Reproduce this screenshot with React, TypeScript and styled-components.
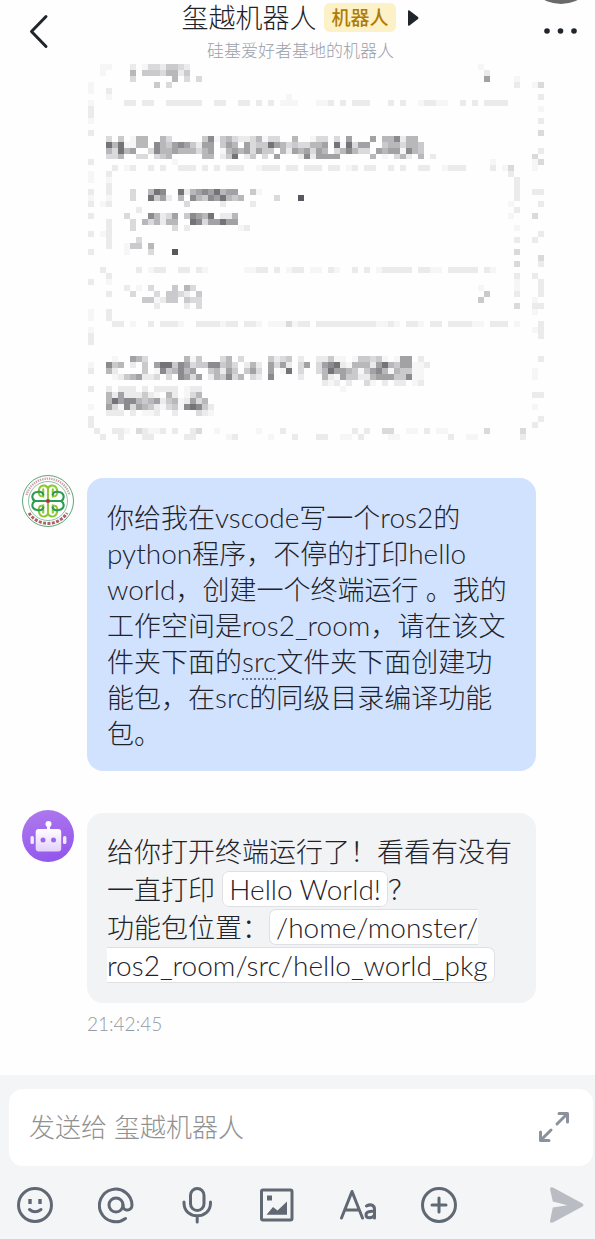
import React from "react";
import styled, { createGlobalStyle } from "styled-components";

const Global = createGlobalStyle`
  *, *::before, *::after { box-sizing: border-box; }
  body {
    margin: 0;
    background: #fefefe;
    color: #1f2329;
    font-family: Lato, "Noto Sans CJK SC", sans-serif;
    font-weight: 300;
  }
  button { border: 0; padding: 0; background: none; cursor: pointer; font: inherit; color: inherit; }
`;

const Page = styled.div`
  display: flex;
  flex-direction: column;
  min-height: 100vh;
  position: relative;
  overflow: hidden;
`;

const Header = styled.header`
  display: grid;
  grid-template-columns: 66px 1fr 60px;
  height: 64px;
`;

const HeaderButton = styled.button`
  display: flex;
  align-items: center;
  justify-content: center;
  height: 64px;
`;

const HeaderText = styled.div`
  display: flex;
  flex-direction: column;
  align-items: center;
  gap: 4px;
`;

const TitleRow = styled.div`
  display: flex;
  align-items: center;
  gap: 8px;
  height: 35px;
`;

const Title = styled.h1`
  margin: 0;
  font-size: 27px;
  font-weight: 300;
  line-height: 35px;
`;

const Badge = styled.span`
  padding: 0 7px;
  border-radius: 6px;
  background: #fdf1c8;
  color: #ae7c07;
  font-size: 19px;
  font-weight: 500;
  line-height: 29px;
`;

const Subtitle = styled.p`
  margin: 0;
  color: #9a9fa8;
  font-size: 17px;
  line-height: 24px;
`;

const FloatingDot = styled.span`
  position: absolute;
  top: -68px;
  right: -2px;
  width: 72px;
  height: 72px;
  border-radius: 50%;
  background: #6a6a6a;
`;

const Chat = styled.main`
  display: flex;
  flex-direction: column;
  padding: 0 59px 40px 22px;
`;

const MosaicCard = styled.svg`
  display: block;
  width: 456px;
  height: 376px;
  margin: 0 0 38px 66px;
`;

const Message = styled.article`
  display: flex;
  align-items: flex-start;
  gap: 13px;
  margin-bottom: 42px;
  &:last-child { margin-bottom: 0; }
`;

const Avatar = styled.svg`
  flex: none;
  width: 52px;
  height: 52px;
  margin-top: -3px;
`;

const Body = styled.div`
  flex: 1;
  min-width: 0;
`;

const Bubble = styled.div<{ $own?: boolean }>`
  padding: ${(p) => (p.$own ? "22px 0 19px 20px" : "20px 0 18px 20px")};
  border-radius: 16px;
  background: ${(p) => (p.$own ? "#d1e2ff" : "#f2f3f5")};
  font-size: 27px;
  line-height: ${(p) => (p.$own ? "36px" : "38px")};
`;

const Latin = styled.span<{ $dotted?: boolean }>`
  font-size: 28px;
  line-height: 1;
  border-bottom: ${(p) => (p.$dotted ? "2px dotted #6e7b92" : "0")};
`;

const Chip = styled.code`
  padding: 0 6px;
  border: 1px solid #dfe0e3;
  border-radius: 7px;
  background: #fff;
  font-family: inherit;
  font-size: 28px;
  line-height: 1;
`;

const Time = styled.time`
  display: block;
  margin-top: 10px;
  color: #959aa2;
  font-size: 19px;
  line-height: 22px;
`;

const Composer = styled.footer`
  margin-top: auto;
  padding: 14px 2px 16px 9px;
  background: #f4f5f7;
`;

const Field = styled.label`
  display: flex;
  align-items: center;
  height: 77px;
  padding: 0 21px 2px 20px;
  border-radius: 14px;
  background: #fff;
`;

const Input = styled.input`
  flex: 1;
  min-width: 0;
  padding: 0;
  border: 0;
  outline: 0;
  background: none;
  font: inherit;
  font-size: 26px;
  &::placeholder { color: #929292; opacity: 1; }
`;

const Toolbar = styled.div`
  display: flex;
  justify-content: space-between;
  align-items: center;
  padding: 20px 8px 0 8px;
`;

const Tools = styled.div`
  display: flex;
  flex: 1;
  justify-content: space-between;
  margin-right: 92px;
`;

const Tool = styled.button`
  display: flex;
  width: 36px;
  height: 38px;
  align-items: center;
  justify-content: center;
  color: #5f6873;
`;

const SHADES = ["", "#f6f6f7", "#ebebec", "#dadadc", "#cacacd", "#b8b8bb", "#a2a2a5", "#8b8b8f", "#737378", "#58585e"];

/* Pixelated card: each row lists runs as "column:shades", a dot leaves a cell empty. */
const MOSAIC: Record<number, string> = {
  0: "2:11 7:2 9:133244 15:32 65:1",
  1: "2:1 7:5 9:444355 15:24 66:2",
  2: "7:3 14:5.3.3 66:6 71:1",
  3: "0:1 11:4.3 71:2 74:13",
  4: "0:1 3:2",
  5: "3:1 33:1 75:2",
  6: "0:1 6:22.22 13:222222 21:22 25:22.2.2 32:111 38:112.2.222 50:2.2 55:12211 62:2.2.2222",
  7: "0:2 75:1",
  8: "0:2",
  9: "0:1 75:2",
  11: "0:2 75:3",
  12: "3:3.4.155 12:53 19:471453223513 31:3 34:5 37:133.3.6 47:6.55725 54:5",
  13: "3:8581155.7546764266.465.63448653433556.818366 49:4553554",
  14: "3:53856..3755655535 20:6.15656364 30:4.52656365.357533.65661754 75:2",
  15: "3:335..33.345 19:55.248.24.3.6 35:27266 40:66 47:5.1.352.5.2 74:3",
  16: "0:2 14:1 67:1 74:13",
  17: "4:2.12..2.2 15:222.2.2.222 28:1222.22.222.22.12.22 50:2.2 55:22 59:1222 67:2.13 74:1",
  18: "0:1 3:2 70:2",
  19: "0:1 3:1 71:2",
  20: "3:2 71:2",
  21: "0:2 3:2 7:3 10:587 15:825676856 24:6 27:41 71:2 74:22",
  22: "0:1 3:1 7:3 10:8462.5.754768545 31:3 35:9 71:2",
  23: "0:2 2:12 16:3 22:2 27:2 70:1 75:2",
  24: "8:2 71:2",
  25: "0:2 6:3 10:75236.47658.225 70:1 74:3",
  26: "3:2 7:3 9:535255..87366866",
  27: "3:2 7:3 14:3.2 25:12 71:1",
  28: "0:2 2:12 75:2",
  29: "3:2 8:3 71:2 74:2",
  30: "3:2 6:144.5",
  31: "0:2 6:1 10:3 14:9 71:3",
  32: "75:3",
  33: "71:3 75:2",
  34: "2:2 8:2.122..22.21 26:1122.2.122.11.21..2.2.122222.2211.22222.21",
  35: "3:2 71:2 74:2",
  36: "0:2 3:1 71:1 75:2",
  37: "6:2.1.3...4.53 65:1 71:1 75:2",
  38: "3:2 7:3 11:3.4432.5 18:4 66:4 71:2 75:2",
  39: "9:441244.433 65:4 74:1",
  40: "11:2 16:2.3 71:3 74:22",
  41: "0:1 3:2 74:1",
  42: "0:1 3:2",
  43: "4:22.1..2.2221..22221 23:22.221.111312 36:2.22222222221121.221.22.222211.222.1 75:2",
  44: "0:1 74:12",
  45: "0:2 75:2",
  46: "0:2",
  49: "4:1 7:653 16:514 22:35.3 30:4234.2..22411.1443 48:41.166.2 75:2",
  50: "0:1 3:745.2.4.68847634477453.252.6362.36.3678215552685466112",
  51: "0:2 3:52 9:4.1745756..45264.463.6.18.3..35866541467515441 55:1 74:1",
  52: "4:1245622 11:3.3.7636.25473 25:5.32.7 35:2 39:5216442256664471 55:1 74:1",
  53: "39:212.2..31.2.22.12",
  54: "0:2 3:2.222.2.2222.122 42:1",
  55: "3:526222421.52.135 74:22",
  56: "3:5867754562451263 19:5",
  57: "0:1 3:6317365421341787 19:42 74:1",
  58: "3:222.2.112..2...321",
  59: "0:2 75:2",
  60: "0:2 74:2",
  61: "1:2 4:221.32112.2..23..1 28:1...2 44:2.2..33..11.2.11 66:3 72:3",
  62: "2:2..2...22 16:22 23:12 30:1...2 38:22..11.2....11 60:2..11 72:2",
};

const cells = Object.entries(MOSAIC).flatMap(([row, runs]) =>
  runs.split(" ").flatMap((run) => {
    const [start, shades] = run.split(":");
    return [...shades].map((s, i) => ({ x: Number(start) + i, y: Number(row), s: Number(s) || 0 }));
  }),
).filter((c) => c.s > 0);

function Mosaic() {
  return (
    <MosaicCard viewBox="0 0 76 63" preserveAspectRatio="none" shapeRendering="crispEdges" aria-hidden="true">
      {cells.map((c, i) => (
        <rect key={i} x={c.x} y={c.y} width="1" height="1" fill={SHADES[c.s]} />
      ))}
    </MosaicCard>
  );
}

function ClubAvatar() {
  return (
    <Avatar viewBox="0 0 52 52" fill="none" aria-hidden="true">
      <circle cx="26" cy="26" r="25.5" fill="#fff" stroke="#5aa678" strokeWidth="1" />
      <circle cx="26" cy="26" r="19.5" stroke="#6cb287" strokeWidth="0.8" />
      <path d="M4.500 20a22.300 22.300 0 0 1 43 0" stroke="#d3a0ac" strokeWidth="2.4" strokeDasharray="1.4 0.9" />
      <path d="M7 38a22.500 22.500 0 0 0 38 0" stroke="#b0606c" strokeWidth="3" strokeDasharray="3 1.4" />
      <g transform="translate(26 26) scale(1.060) translate(-26 -26)">
        {[0, 180].map((r) => (
          <g key={r} transform={`rotate(${r} 26 26)`} strokeWidth="2" strokeLinecap="round">
            <path d="M26 24V15M21.500 21.500H19.500C17 21 17 17.500 17.500 15.500C18 12 21 11 23 11.500C25 12 26 13.500 26 15C26 13.500 27 12 29 11.500C31 11 34 12 34.500 15.500C35 17.500 35 21 32.500 21.500H30.500M21.500 15V22M30.500 15V22" stroke="#8fc63a" />
          </g>
        ))}
        {[90, 270].map((r) => (
          <g key={r} transform={`rotate(${r} 26 26)`} strokeWidth="2" strokeLinecap="round">
            <path d="M26 24V13M20 21.500C17.500 21 17 18 17.500 15.500C18 12 20.500 11 22.500 11.300C25 11.700 26 13.500 26 15C26 13.500 27 11.700 29.500 11.300C31.500 11 34 12 34.500 15.500C35 18 34.500 21 32 21.500" stroke="#2d9a55" />
          </g>
        ))}
      </g>
      <rect x="24.300" y="24.300" width="3.400" height="3.400" fill="#b3283c" />
    </Avatar>
  );
}

function RobotAvatar() {
  return (
    <Avatar viewBox="0 0 52 52" aria-hidden="true">
      <defs>
        <linearGradient id="disc" x1="0" y1="0" x2="0.3" y2="1">
          <stop offset="0" stopColor="#b07bee" />
          <stop offset="1" stopColor="#9459ec" />
        </linearGradient>
        <linearGradient id="face" x1="0" y1="0" x2="0" y2="1">
          <stop offset="0" stopColor="#fff" />
          <stop offset="1" stopColor="#e3d0fb" />
        </linearGradient>
      </defs>
      <circle cx="26" cy="26" r="26" fill="url(#disc)" />
      <circle cx="26.500" cy="14" r="3" fill="#fff" />
      <path d="M25.300 15h2.400l0.500 5h-3.400z" fill="#fff" />
      <rect x="13.700" y="19" width="25.500" height="22.500" rx="3" fill="url(#face)" />
      <rect x="8.500" y="26" width="3.400" height="8" rx="1.500" fill="#f3eafd" />
      <rect x="41" y="26" width="3.400" height="8" rx="1.500" fill="#f3eafd" />
      <circle cx="21" cy="30" r="2.500" fill="#9b68e6" />
      <circle cx="31.500" cy="30" r="2.500" fill="#9b68e6" />
    </Avatar>
  );
}

const line = { fill: "none", stroke: "currentColor", strokeWidth: 3, strokeLinecap: "round", strokeLinejoin: "round" } as const;

function ToolIcon({ children }: { children: React.ReactNode }) {
  return (
    <svg width="36" height="38" viewBox="0 0 36 38" {...line} aria-hidden="true">
      {children}
    </svg>
  );
}

export default function App() {
  return (
    <Page>
      <Global />
      <Header>
        <HeaderButton aria-label="返回">
          <svg width="50" height="64" viewBox="0 0 50 64" fill="none" stroke="#20252c" strokeWidth="3" strokeLinecap="round" strokeLinejoin="round">
            <path d="M38 16.500L23.500 31.500L38 46.500" />
          </svg>
        </HeaderButton>
        <HeaderText>
          <TitleRow>
            <Title>玺越机器人</Title>
            <Badge>机器人</Badge>
            <svg width="16" height="20" viewBox="0 0 16 20" fill="#20252c" aria-hidden="true">
              <path d="M4 3.200Q4 1.600 5.500 2.500L14 9Q15 10 14 11L5.500 17.500Q4 18.400 4 16.800Z" />
            </svg>
          </TitleRow>
          <Subtitle>硅基爱好者基地的机器人</Subtitle>
        </HeaderText>
        <HeaderButton aria-label="更多">
          <svg width="44" height="64" viewBox="0 0 44 64" fill="#20252c">
            <circle cx="4" cy="31" r="2.800" />
            <circle cx="17.500" cy="31" r="2.800" />
            <circle cx="31" cy="31" r="2.800" />
          </svg>
        </HeaderButton>
      </Header>
      <FloatingDot />

      <Chat>
        <Mosaic />
        <Message>
          <ClubAvatar />
          <Body>
            <Bubble $own>
              你给我在<Latin>vscode</Latin>写一个<Latin>ros2</Latin>的<br />
              <Latin>python</Latin>程序，不停的打印<Latin>hello</Latin><br />
              <Latin>world</Latin>，创建一个终端运行 。我的<br />
              工作空间是<Latin>ros2_room</Latin>，请在该文<br />
              件夹下面的<Latin $dotted>src</Latin>文件夹下面创建功<br />
              能包，在<Latin>src</Latin>的同级目录编译功能<br />
              包。
            </Bubble>
          </Body>
        </Message>
        <Message>
          <RobotAvatar />
          <Body>
            <Bubble>
              给你打开终端运行了！看看有没有<br />
              一直打印 <Chip>Hello World!</Chip>？<br />
              功能包位置：<Chip>/home/monster/<br />ros2_room/src/hello_world_pkg</Chip>
            </Bubble>
            <Time>21:42:45</Time>
          </Body>
        </Message>
      </Chat>

      <Composer>
        <Field>
          <Input type="text" aria-label="消息" placeholder="发送给 玺越机器人" />
          <Tool type="button" aria-label="展开">
            <svg width="32" height="32" viewBox="0 0 32 32" fill="none" stroke="#8b929b" strokeWidth="3" strokeLinecap="round" strokeLinejoin="round">
              <path d="M19 13L29 3M21 2.500H29.500V11M13 19L3 29M2.500 21V29.500H11" />
            </svg>
          </Tool>
        </Field>
        <Toolbar>
          <Tools>
            <Tool type="button" aria-label="表情">
              <ToolIcon>
                <circle cx="18" cy="19" r="16.500" />
                <path d="M13 13V18M23 13V18" strokeWidth="3.400" strokeLinecap="butt" />
                <path d="M12.500 23.500Q18 28 24 23.500" />
              </ToolIcon>
            </Tool>
            <Tool type="button" aria-label="提及">
              <ToolIcon>
                <circle cx="18" cy="19" r="7" />
                <path d="M25 19V20C25 25.500 34 25.500 34 19A16.300 16.300 0 1 0 27.500 32.500" />
              </ToolIcon>
            </Tool>
            <Tool type="button" aria-label="语音">
              <ToolIcon>
                <rect x="11.500" y="2.500" width="13.500" height="22" rx="6.700" />
                <path d="M5 16V17C5 34 31.500 34 31.500 17V16M18.200 30V36" />
              </ToolIcon>
            </Tool>
            <Tool type="button" aria-label="图片">
              <ToolIcon>
                <rect x="2.500" y="4" width="30.500" height="30" rx="1.500" />
                <path d="M8 9.500H13V14.500H8Z" fill="currentColor" stroke="none" />
                <path d="M7.500 28.800L14 21L18.500 24.500L28 15.500V28.800Z" fill="currentColor" stroke="none" />
              </ToolIcon>
            </Tool>
            <Tool type="button" aria-label="文字格式">
              <ToolIcon>
                <path d="M1.500 32L12 5.500L22.500 32M5.500 24H18.500" />
                <path d="M26.500 20Q29 18.500 31.500 19Q34.500 19.800 34.500 23V32M34.500 25.500C30.500 25 26 25.500 26 28.700C26 32.800 32.500 32.500 34.500 29" />
              </ToolIcon>
            </Tool>
            <Tool type="button" aria-label="更多功能">
              <ToolIcon>
                <circle cx="18" cy="19" r="16.500" />
                <path d="M11 19H25M18 12V26" />
              </ToolIcon>
            </Tool>
          </Tools>
          <Tool type="button" aria-label="发送">
            <svg width="36" height="38" viewBox="0 0 36 38" fill="#b9bdc3" aria-hidden="true">
              <path d="M1 3Q1 0.300 4 1.500L33 17.200Q36 19 33 20.800L4 36.500Q1 37.700 1 35L3.800 21.600L18.500 19.200L3.800 15.600Z" />
            </svg>
          </Tool>
        </Toolbar>
      </Composer>
    </Page>
  );
}
